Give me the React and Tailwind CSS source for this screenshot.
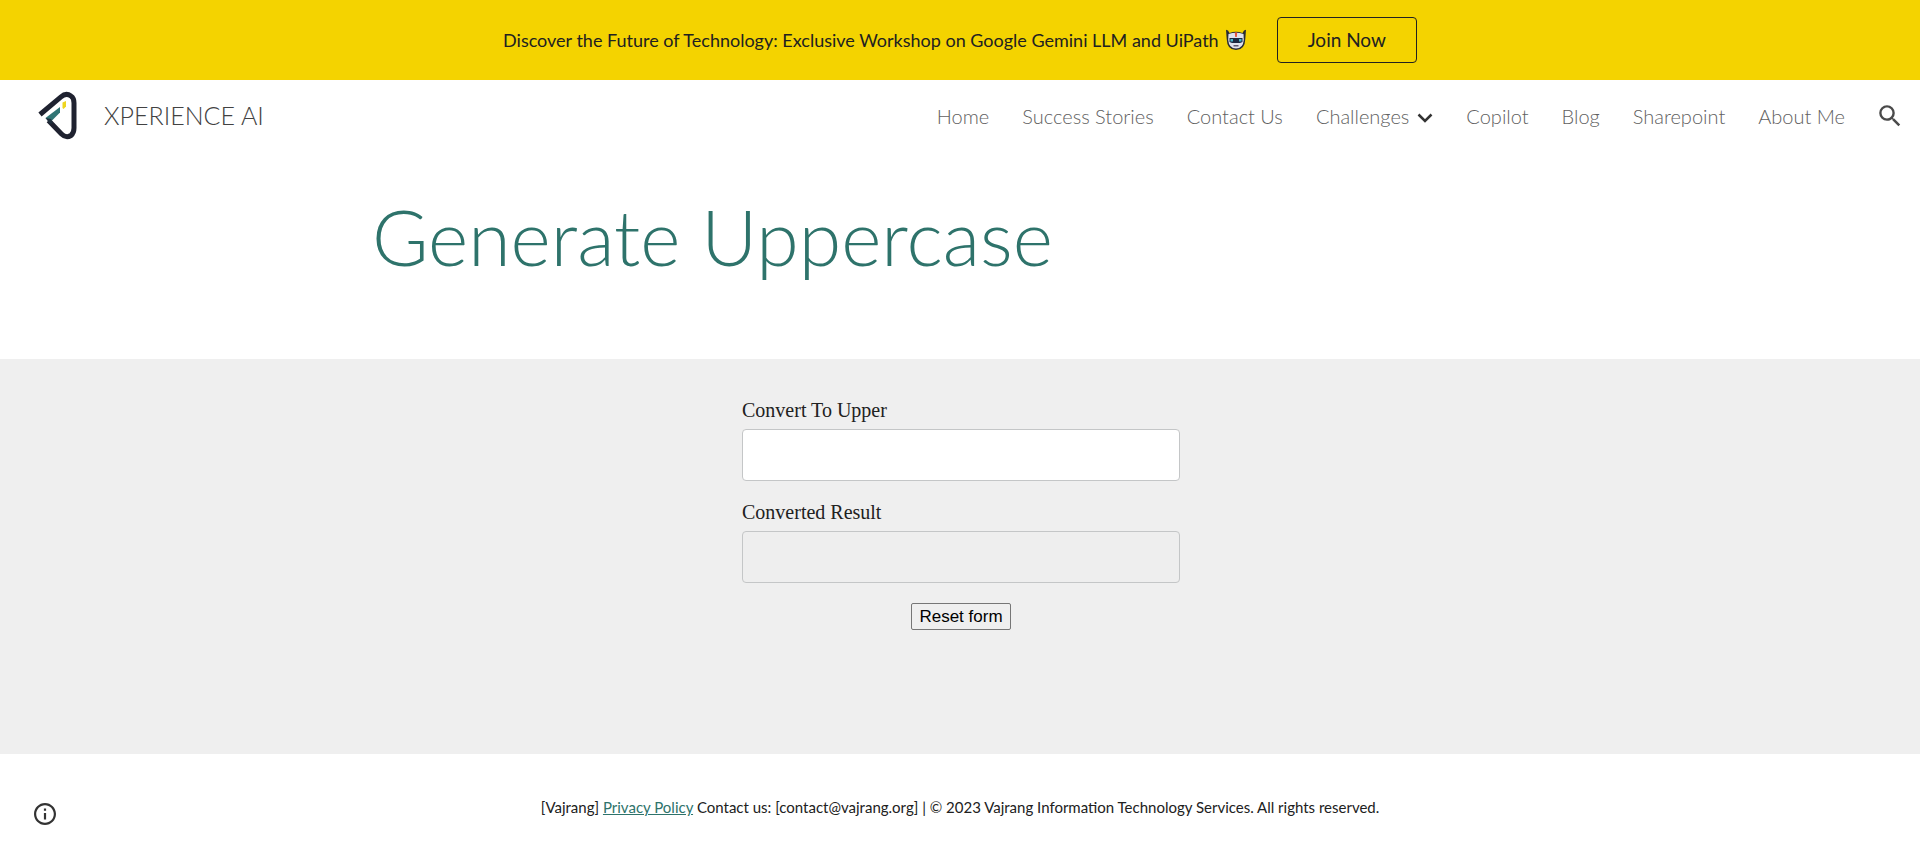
import { useState } from "react";

const linksBefore = ["Home", "Success Stories", "Contact Us"];
const linksAfter = ["Copilot", "Blog", "Sharepoint", "About Me"];

function Logo() {
  return (
    <svg viewBox="0 0 44 52" className="h-[52px] w-11" fill="none" aria-hidden="true">
      <path d="M4 24.500 L25 6.800 Q30 2.500 35 6 Q38 8 38 13 V38 Q38 43 35 45.500 Q30 48.500 25.500 44 L12.500 30.500" stroke="#1f2230" strokeWidth="5" />
      <path d="M9.500 28 L24 17 V22.500 L14.500 32 Z" fill="#2f7474" />
      <path d="M9.500 28 L15 29 L17 33 L14 34 Z" fill="#1f2f3d" />
      <path d="M26.500 12.500 L30 11 V16.500 L27.500 19 L26.500 18 Z" fill="#eed51f" />
    </svg>
  );
}

function Robot() {
  return (
    <svg viewBox="0 0 22 22" className="h-[22px] w-[22px]" aria-hidden="true">
      <path d="M1 0.800 L3 1.500 L4.500 4 Q11 1.500 17.500 4 L19 1.500 L21 0.800 L20.300 10 Q20 21 11 21 Q2 21 1.700 10 Z" fill="#292b33" />
      <path d="M3.500 5 Q11 2.500 18.500 5 L18.800 11 Q18 19.500 11 19.500 Q4 19.500 3.200 11 Z" fill="#dfe2ed" />
      <path d="M9.800 3.500 H12.200 L11.800 8 H10.200 Z" fill="#e5533c" />
      <path d="M4.500 9 H17.500 V13 L15 14 H7 L4.500 13 Z" fill="#1b2740" />
      <path d="M5.500 10 H8 V12.500 H5.500 Z M14 10 H16.500 V12.500 H14 Z" fill="#48b8cf" />
      <path d="M8.500 16.200 H13.500 V17.400 H8.500 Z" fill="#3c3550" />
    </svg>
  );
}

export default function App() {
  const [text, setText] = useState("");
  const field = "h-[52px] w-full rounded border border-[#c4c6c7] px-3 text-lg outline-none";
  return (
    <div className="flex min-h-screen flex-col bg-white font-['Lato',sans-serif] text-[#212121]">
      <div className="flex h-20 items-center justify-center gap-[30px] bg-[#f4d300] text-lg">
        <p className="flex items-center gap-[6px]">
          Discover the Future of Technology: Exclusive Workshop on Google Gemini LLM and UiPath <Robot />
        </p>
        <a href="#join" className="flex h-[46px] items-center rounded border border-[#212121] px-[30px] text-[19px]">Join Now</a>
      </div>

      <header className="flex h-[71px] items-center justify-between pr-[18px] pl-9">
        <a href="#home" className="flex items-center gap-6">
          <Logo />
          <span className="text-[25px] font-light text-[#424242]">XPERIENCE AI</span>
        </a>
        <nav className="flex items-center gap-[33px] text-xl font-light text-[#616161]">
          {linksBefore.map((l) => <a key={l} href="#page">{l}</a>)}
          <button type="button" className="flex items-center gap-2">
            Challenges
            <svg viewBox="0 0 16 16" className="mt-1 h-4 w-4" fill="none" stroke="#333333" strokeWidth="2.500" aria-hidden="true"><path d="M1.500 4.500 L8 11 L14.500 4.500" /></svg>
          </button>
          {linksAfter.map((l) => <a key={l} href="#page">{l}</a>)}
          <button type="button" aria-label="Search">
            <svg viewBox="2 2 20 20" className="h-6 w-6" fill="#4a4a4a" aria-hidden="true"><path d="M15.500 14h-.79l-.28-.27A6.471 6.471 0 0 0 16 9.500 6.500 6.500 0 1 0 9.500 16c1.610 0 3.090-.59 4.230-1.570l.27.28v.79l5 4.990L20.490 19l-4.990-5zm-6 0C7.010 14 5 11.990 5 9.500S7.010 5 9.500 5 14 7.010 14 9.500 11.990 14 9.500 14z" /></svg>
          </button>
        </nav>
      </header>

      <main>
        <section className="mx-auto h-52 w-full max-w-[1176px] pt-10">
          <h1 className="text-[77px] leading-[90px] font-light text-[#2e736b]">Generate Uppercase</h1>
        </section>
        <section className="h-[395px] bg-[#efefef] pt-[37px] pl-[2px]">
          <form className="mx-auto flex w-full max-w-[438px] flex-col font-['Liberation_Serif',serif] text-xl" onReset={() => setText("")}>
            <label htmlFor="source" className="mb-[5px] leading-7">Convert To Upper</label>
            <input id="source" type="text" value={text} onChange={(e) => setText(e.target.value)} className={field + " mb-[17px] bg-white"} />
            <label htmlFor="result" className="mb-[5px] leading-7">Converted Result</label>
            <input id="result" type="text" readOnly value={text.toUpperCase()} className={field + " mb-5 bg-[#eeeeee]"} />
            <button type="reset" className="h-[27px] self-center rounded-xs border border-[#767676] bg-[#efefef] px-[7px] font-['Liberation_Sans',sans-serif] text-[17px] leading-6 text-black">Reset form</button>
          </form>
        </section>
      </main>

      <footer className="flex grow items-center pt-1 pr-8 pl-[34px] text-[15px]">
        <button type="button" aria-label="Site information" className="mt-3">
          <svg viewBox="2 2 20 20" className="h-[22px] w-[22px]" fill="#333333" aria-hidden="true"><path d="M11 17h2v-6h-2v6zm1-15C6.480 2 2 6.480 2 12s4.480 10 10 10 10-4.480 10-10S17.520 2 12 2zm0 18c-4.410 0-8-3.590-8-8s3.590-8 8-8 8 3.590 8 8-3.590 8-8 8zM11 9h2V7h-2v2z" /></svg>
        </button>
        <p className="grow pr-6 text-center">
          [Vajrang] <a href="#privacy" className="text-[#2e736b] underline">Privacy Policy</a> Contact us: [contact@vajrang.org] | © 2023 Vajrang Information Technology Services. All rights reserved.
        </p>
      </footer>
    </div>
  );
}
